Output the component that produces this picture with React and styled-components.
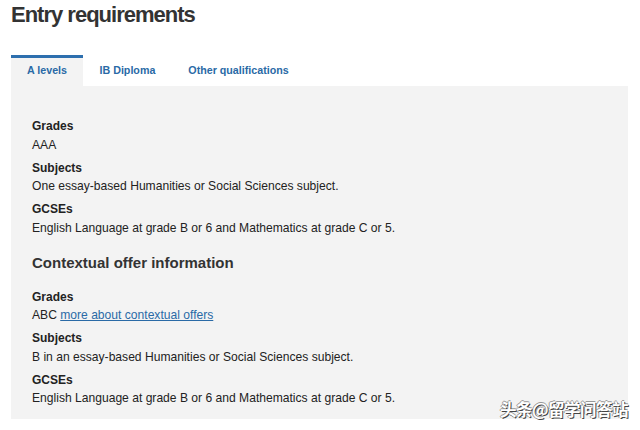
import styled, { createGlobalStyle } from "styled-components";

const GlobalStyle = createGlobalStyle`
  html, body {
    margin: 0;
    padding: 0;
    background: #ffffff;
  }
  body {
    font-family: "Liberation Sans", Arial, sans-serif;
    color: #222;
    width: 640px;
    height: 430px;
    overflow: hidden;
  }
`;

const Page = styled.div`
  position: relative;
  width: 640px;
  height: 430px;
  padding: 1px 11px 0;
  box-sizing: border-box;
`;

const Title = styled.h2`
  margin: 0;
  font-size: 22px;
  line-height: 28px;
  letter-spacing: -1px;
  font-weight: bold;
  color: #333;
`;

const Tabs = styled.div`
  display: flex;
  margin-top: 26px;
  height: 31px;
`;

const Tab = styled.div`
  box-sizing: border-box;
  padding: 0 ${(p) => (p.$active ? "16px" : "16.5px")} 4px;
  height: 31px;
  display: flex;
  align-items: center;
  font-size: 10.7px;
  font-weight: bold;
  color: #2a6aa6;
  background: ${(p) => (p.$active ? "#f3f3f3" : "transparent")};
  border-top: ${(p) => (p.$active ? "3px solid #2d6fae" : "3px solid transparent")};
`;

const Panel = styled.div`
  background: #f3f3f3;
  width: 617px;
  height: 333px;
  box-sizing: border-box;
  padding: 33px 21px 0;
`;

const Section = styled.div`
  display: flex;
  flex-direction: column;
`;

const Label = styled.div`
  font-size: 12px;
  font-weight: bold;
  line-height: 14px;
  color: #222;
`;

const Value = styled.div`
  font-size: 12.1px;
  line-height: 14px;
  margin-top: 4.5px;
  margin-bottom: 9px;
  color: #222;
`;

const SubHeading = styled.h3`
  margin: 9px 0 17px;
  font-size: 15px;
  line-height: 20px;
  font-weight: bold;
  color: #333;
`;

const Link = styled.a`
  color: #2a6aa6;
  text-decoration: underline;
`;

const Watermark = styled.div`
  position: absolute;
  right: 12px;
  bottom: 9px;
  font-family: "Noto Sans CJK SC", sans-serif;
  font-size: 16.5px;
  font-weight: bold;
  letter-spacing: -0.5px;
  color: #fff;
  text-shadow: 1px 1px 0 #444, -1px 0 0 #999, 0 -1px 0 #999;
`;

const blocks = [
  { label: "Grades", value: "AAA" },
  { label: "Subjects", value: "One essay-based Humanities or Social Sciences subject." },
  { label: "GCSEs", value: "English Language at grade B or 6 and Mathematics at grade C or 5." },
];

const contextual = [
  {
    label: "Grades",
    value: (
      <>
        ABC <Link href="#">more about contextual offers</Link>
      </>
    ),
  },
  { label: "Subjects", value: "B in an essay-based Humanities or Social Sciences subject." },
  { label: "GCSEs", value: "English Language at grade B or 6 and Mathematics at grade C or 5." },
];

export default function App() {
  return (
    <Page>
      <GlobalStyle />
      <Title>Entry requirements</Title>
      <Tabs>
        <Tab $active>A levels</Tab>
        <Tab>IB Diploma</Tab>
        <Tab>Other qualifications</Tab>
      </Tabs>
      <Panel>
        <Section>
          {blocks.map((b) => (
            <div key={b.label}>
              <Label>{b.label}</Label>
              <Value>{b.value}</Value>
            </div>
          ))}
        </Section>
        <SubHeading>Contextual offer information</SubHeading>
        <Section>
          {contextual.map((b) => (
            <div key={b.label}>
              <Label>{b.label}</Label>
              <Value>{b.value}</Value>
            </div>
          ))}
        </Section>
      </Panel>
      <Watermark>头条@留学问答站</Watermark>
    </Page>
  );
}
